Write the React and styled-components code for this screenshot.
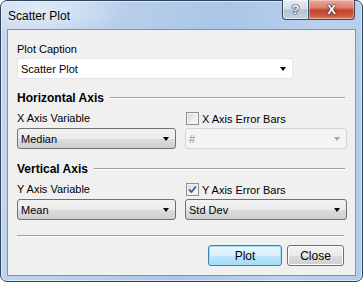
import React, { useState } from 'react';
import styled, { createGlobalStyle, css } from 'styled-components';

const GlobalStyle = createGlobalStyle`
  html, body {
    margin: 0;
    padding: 0;
    background: #ffffff;
  }
  body {
    font-family: "Liberation Sans", Arial, sans-serif;
    font-size: 11px;
    color: #000;
  }
`;

const Window = styled.div`
  box-sizing: border-box;
  width: 363px;
  height: 282px;
  border: 1px solid #2f4259;
  border-radius: 7px;
  background:
    radial-gradient(ellipse 120px 40px at 40px 10px, rgba(255,255,255,0.55), rgba(255,255,255,0) 70%),
    linear-gradient(100deg, #c4d8ef 0%, #b5cde9 35%, #a9c5e8 55%, #bad1ec 80%, #b1cbe9 100%);
  box-shadow: inset 0 0 0 1px rgba(255,255,255,0.55);
  display: flex;
  flex-direction: column;
  padding: 0 6px 5px 6px;
`;

const TitleBar = styled.div`
  height: 28px;
  display: flex;
  align-items: flex-start;
  justify-content: space-between;
`;

const Title = styled.div`
  font-size: 12px;
  line-height: 14px;
  padding: 8px 0 0 1px;
  color: #000;
`;

const CaptionButtons = styled.div`
  display: flex;
  margin-top: -1px;
  margin-right: 1px;
`;

const CaptionButton = styled.div`
  box-sizing: border-box;
  height: 20px;
  border: 1px solid #3b4a5e;
  border-top: none;
  display: flex;
  align-items: center;
  justify-content: center;
  color: #fff;
  font-weight: bold;
  text-shadow: 0 0 1px #1e2a3a, 0 0 1px #1e2a3a, 0 0 2px #1e2a3a;
  ${({ kind }) =>
    kind === 'close'
      ? css`
          width: 46px;
          border-left: none;
          border-bottom-right-radius: 4px;
          font-size: 13px;
          background: linear-gradient(#e9a99b 0%, #dd7f6c 40%, #c4422a 55%, #cf5a40 85%, #e48a6e 100%);
          box-shadow: inset 0 0 0 1px rgba(255,255,255,0.35);
        `
      : css`
          width: 27px;
          border-bottom-left-radius: 4px;
          font-size: 13px;
          background: linear-gradient(#e6edf5 0%, #d3dde9 45%, #b5c3d4 55%, #c4d1e0 100%);
          box-shadow: inset 0 0 0 1px rgba(255,255,255,0.5);
        `}
`;

const Client = styled.div`
  flex: 1;
  box-sizing: border-box;
  border: 1px solid #8193aa;
  background: #f0f0f0;
  padding: 13px 9px 0 9px;
  display: flex;
  flex-direction: column;
`;

const Label = styled.div`
  height: 13px;
  line-height: 13px;
  white-space: nowrap;
  color: ${({ disabled }) => (disabled ? '#8d8d8d' : '#000')};
`;

const SectionHeader = styled.div`
  display: flex;
  align-items: center;
  height: 14px;
  margin-top: ${({ top }) => top}px;
  font-weight: bold;
  font-size: 12px;
  white-space: nowrap;
  &::after {
    content: '';
    flex: 1;
    height: 0;
    margin-left: 6px;
    margin-right: 1px;
    border-top: 1px solid #a0a0a0;
    border-bottom: 1px solid #ffffff;
  }
`;

const Row = styled.div`
  display: grid;
  grid-template-columns: 159px 162px;
  column-gap: 9px;
  align-items: center;
  margin-top: ${({ top }) => top || 0}px;
`;

const Arrow = styled.span`
  width: 0;
  height: 0;
  border-left: 3.5px solid transparent;
  border-right: 3.5px solid transparent;
  border-top: 4px solid ${({ disabled }) => (disabled ? '#a6a6a6' : '#000')};
  margin-right: 6px;
  flex-shrink: 0;
`;

const Combo = styled.div`
  box-sizing: border-box;
  height: 21px;
  display: flex;
  align-items: center;
  justify-content: space-between;
  padding-left: 3px;
  border-radius: 3px;
  ${({ variant }) =>
    variant === 'edit'
      ? css`
          border: 1px solid #e2e6ea;
          border-radius: 2px;
          background: #fff;
        `
      : variant === 'disabled'
      ? css`
          border: 1px solid #d5d5d5;
          background: #f4f4f4;
          color: #8d8d8d;
        `
      : css`
          border: 1px solid #707070;
          background: linear-gradient(#f2f2f2 0%, #ebebeb 50%, #dddddd 51%, #cfcfcf 100%);
        `}
`;

const CaptionField = styled.div`
  margin-top: 2px;
  width: 276px;
`;

const CheckRow = styled.label`
  display: flex;
  align-items: center;
  height: 13px;
  padding-left: 1px;
  cursor: default;
`;

const Box = styled.span`
  box-sizing: border-box;
  width: 13px;
  height: 13px;
  border: 1px solid #8e8f8f;
  background: linear-gradient(135deg, #d6d6d6 0%, #f0f0f0 60%, #fafafa 100%);
  box-shadow: inset 0 0 0 1px #f4f4f4;
  margin-right: 3px;
  display: flex;
  align-items: center;
  justify-content: center;
`;

const Separator = styled.div`
  margin-top: 15px;
  border-top: 1px solid #a0a0a0;
  border-bottom: 1px solid #ffffff;
  width: 327px;
`;

const Buttons = styled.div`
  display: flex;
  justify-content: flex-end;
  gap: 5px;
  margin-top: 8px;
  padding-right: 2px;
`;

const Button = styled.button`
  box-sizing: border-box;
  height: 21px;
  font-family: inherit;
  font-size: 12px;
  border-radius: 3px;
  padding: 0;
  ${({ primary }) =>
    primary
      ? css`
          width: 74px;
          border: 1px solid #3c7fb1;
          background: linear-gradient(#eaf6fd 0%, #d9f0fc 50%, #bee6fd 51%, #a7d9f5 100%);
          box-shadow: inset 0 0 0 1px #9fe1fb;
        `
      : css`
          width: 57px;
          border: 1px solid #707070;
          background: linear-gradient(#f2f2f2 0%, #ebebeb 50%, #dddddd 51%, #cfcfcf 100%);
          box-shadow: inset 0 0 0 1px #fbfbfb;
        `}
`;

const Check = () => (
  <svg width="9" height="9" viewBox="0 0 9 9">
    <path d="M1 4.5 L3.5 7 L8 1.5" fill="none" stroke="#3b5aa6" strokeWidth="1.8" />
  </svg>
);

const CheckBox = ({ checked, onChange, children }) => (
  <CheckRow onClick={onChange}>
    <Box>{checked && <Check />}</Box>
    {children}
  </CheckRow>
);

const Select = ({ value, variant }) => (
  <Combo variant={variant}>
    <span>{value}</span>
    <Arrow disabled={variant === 'disabled'} />
  </Combo>
);

export default function App() {
  const [xErr, setXErr] = useState(false);
  const [yErr, setYErr] = useState(true);

  return (
    <>
      <GlobalStyle />
      <Window>
        <TitleBar>
          <Title>Scatter Plot</Title>
          <CaptionButtons>
            <CaptionButton>?</CaptionButton>
            <CaptionButton kind="close">X</CaptionButton>
          </CaptionButtons>
        </TitleBar>
        <Client>
          <Label>Plot Caption</Label>
          <CaptionField>
            <Select variant="edit" value="Scatter Plot" />
          </CaptionField>

          <SectionHeader top={12}>Horizontal Axis</SectionHeader>
          <Row top={7}>
            <Label>X Axis Variable</Label>
            <CheckBox checked={xErr} onChange={() => setXErr(!xErr)}>X Axis Error Bars</CheckBox>
          </Row>
          <Row top={3}>
            <Select value="Median" />
            <Select variant={xErr ? undefined : 'disabled'} value="#" />
          </Row>

          <SectionHeader top={13}>Vertical Axis</SectionHeader>
          <Row top={7}>
            <Label>Y Axis Variable</Label>
            <CheckBox checked={yErr} onChange={() => setYErr(!yErr)}>Y Axis Error Bars</CheckBox>
          </Row>
          <Row top={3}>
            <Select value="Mean" />
            <Select variant={yErr ? undefined : 'disabled'} value="Std Dev" />
          </Row>

          <Separator />
          <Buttons>
            <Button primary>Plot</Button>
            <Button>Close</Button>
          </Buttons>
        </Client>
      </Window>
    </>
  );
}
